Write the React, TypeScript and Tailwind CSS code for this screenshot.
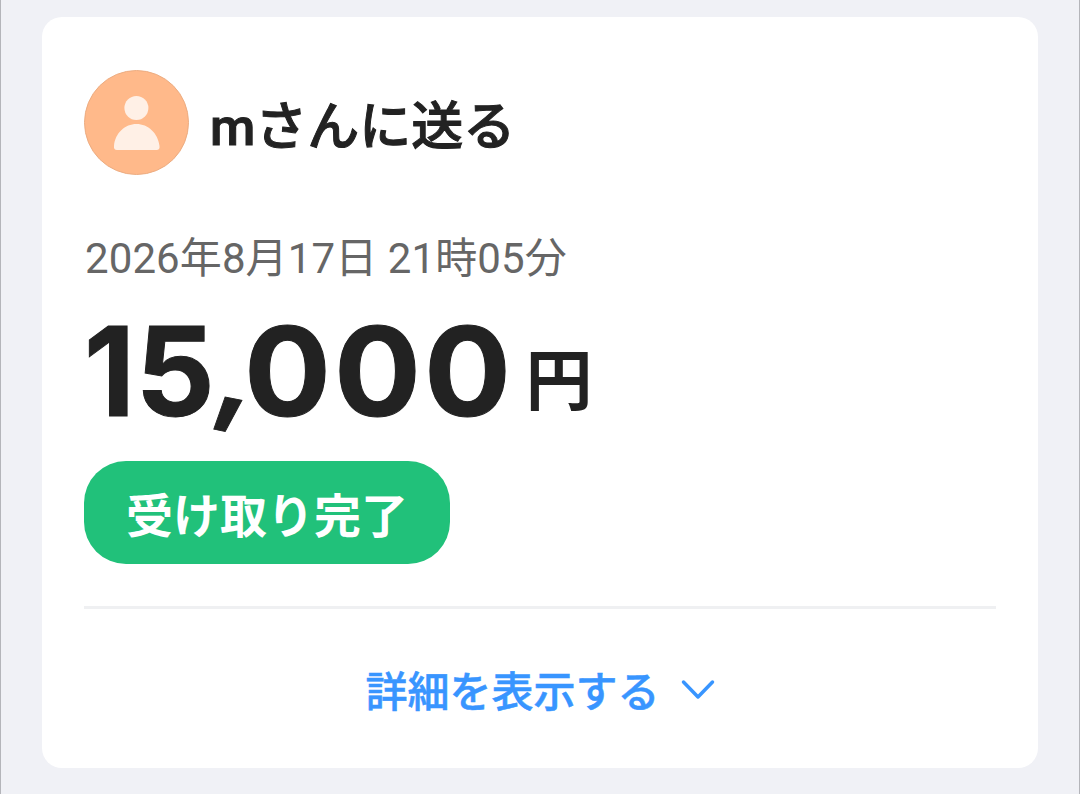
import React from 'react';

function Avatar() {
  return (
    <svg className="-mt-px size-[105px] shrink-0" viewBox="0 0 105 105" fill="none">
      <circle cx="52.5" cy="52.5" r="52" fill="#ffb98a" stroke="#ecac81" />
      <circle cx="52.4" cy="38" r="12" fill="#fff0e6" />
      <path
        d="M30 76C31 63 41 54 52.5 54S74 63 75.5 76Q76 80 72.5 80H33Q29.500 80 30 76Z"
        fill="#fff0e6"
      />
    </svg>
  );
}

export default function App() {
  return (
    <main className="h-[794px] w-[1080px] overflow-hidden border-x border-[#b4b5ba] bg-[#f0f1f6] pt-[17px] pl-[41px] font-['Roboto','Noto_Sans_CJK_JP',sans-serif] text-[#222]">
      <section className="h-[751px] w-[996px] rounded-[20px] bg-white px-[42px] pt-[53px]">
        {/* recipient */}
        <div className="flex h-[106px] items-center">
          <Avatar />
          <h1 className="ml-[21px] pt-[10px] text-[52px] leading-[76px] font-medium whitespace-nowrap [-webkit-text-stroke:1px_#222]">
            mさんに送る
          </h1>
        </div>

        {/* date and amount */}
        <p className="mt-[53px] ml-px text-[42px] leading-[60px] tracking-[0.1px] whitespace-nowrap text-[#666]">
          2026年8月17日 21時05分
        </p>
        <div className="mt-[16px] flex h-[130px] items-baseline whitespace-nowrap">
          <div className="flex font-['Inter',sans-serif] text-[124px] leading-[132px] font-bold [-webkit-text-stroke:1px_#222]">
            <span className="-ml-[0.5px] w-[52px] origin-left scale-x-[0.95]">1</span>
            <span className="w-[76px]">5</span>
            <span className="w-[32px] origin-[50%_75%] -translate-y-[5px] scale-x-[0.94] scale-y-[0.9] rotate-[11deg]">,</span>
            <span className="w-[90px] origin-left scale-x-[1.04]">0</span>
            <span className="w-[90px] origin-left scale-x-[1.04]">0</span>
            <span className="w-[90px] origin-left scale-x-[1.04]">0</span>
          </div>
          <span className="relative -top-[11px] ml-[12px] text-[67px] leading-[67px] font-bold">
            円
          </span>
        </div>

        <div className="mt-[26px] flex h-[103px] w-[366px] items-center justify-center rounded-[42px] bg-[#21c17a] pt-[9px] text-[47px] font-bold whitespace-nowrap text-white">
          受け取り完了
        </div>

        <div className="mt-[42px] h-[3px] bg-[#eff0f2]" />

        <button className="mt-[52px] flex h-[62px] w-full items-center justify-center gap-[21px] text-[42px] font-medium text-[#3895ff]">
          <span className="[-webkit-text-stroke:0.5px_#3895ff]">詳細を表示する</span>
          <svg
            className="-mt-[4px] h-[22px] w-[34px]"
            viewBox="0 0 34 22"
            fill="none"
            stroke="currentColor"
            strokeWidth="3.5"
            strokeLinecap="round"
            strokeLinejoin="round"
          >
            <path d="M2.500 3L17 18L31.500 3" />
          </svg>
        </button>
      </section>
    </main>
  );
}
